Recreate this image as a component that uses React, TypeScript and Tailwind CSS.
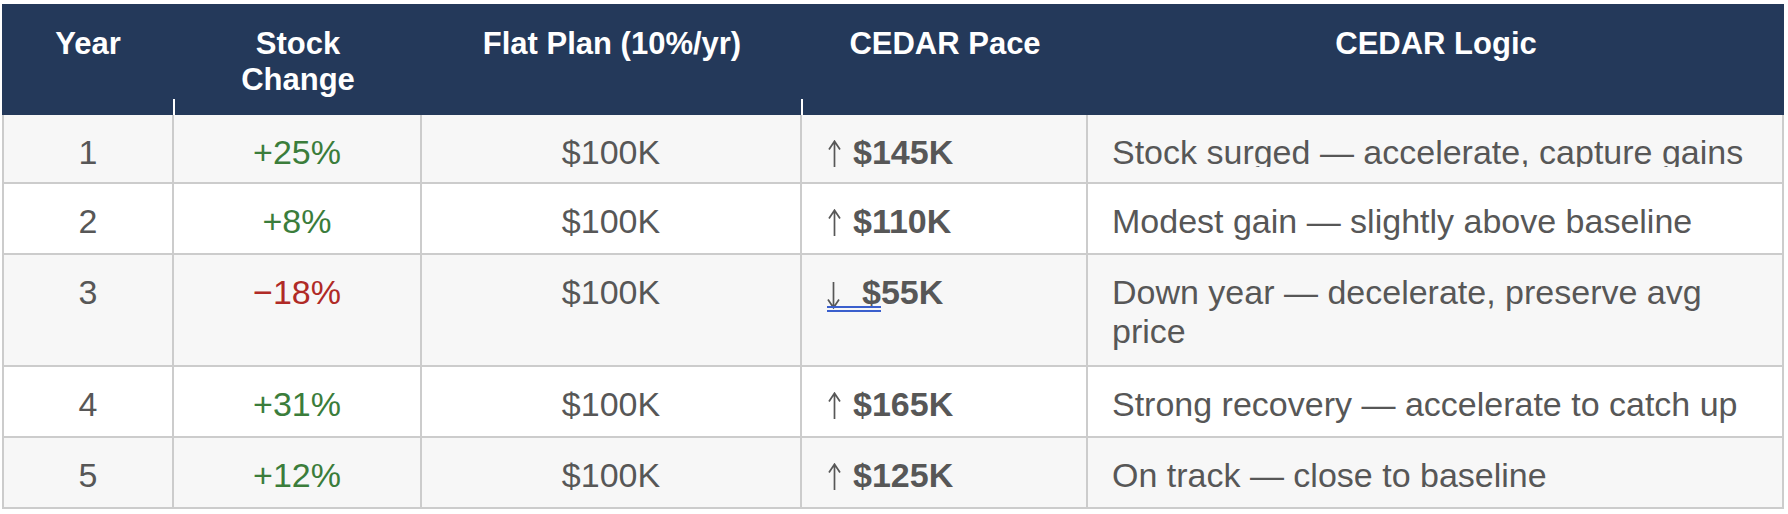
const rows = [
  {
    year: '1',
    change: '+25%',
    up: true,
    flat: '$100K',
    pace: '$145K',
    logic: 'Stock surged — accelerate, capture gains',
    clip: true,
  },
  {
    year: '2',
    change: '+8%',
    up: true,
    flat: '$100K',
    pace: '$110K',
    logic: 'Modest gain — slightly above baseline',
  },
  {
    year: '3',
    change: '−18%',
    up: false,
    flat: '$100K',
    pace: '$55K',
    logic: 'Down year — decelerate, preserve avg price',
  },
  {
    year: '4',
    change: '+31%',
    up: true,
    flat: '$100K',
    pace: '$165K',
    logic: 'Strong recovery — accelerate to catch up',
  },
  {
    year: '5',
    change: '+12%',
    up: true,
    flat: '$100K',
    pace: '$125K',
    logic: 'On track — close to baseline',
  },
]

function Tick() {
  return <span className="absolute bottom-0 right-[-1px] h-[16px] w-[2px] bg-white" />
}

function Arrow({ up }: { up: boolean }) {
  return (
    <svg
      viewBox="0 0 13 27"
      className={`inline-block h-[27px] w-[13px] ${up ? 'ml-[2px] mr-[12px] align-[-3px]' : 'ml-[1px] mr-[22px] align-[-5px]'}`}
      fill="none"
      stroke="currentColor"
      strokeWidth="1.7"
    >
      {up ? (
        <path d="M6.5 1 V27 M1 9.5 L6.5 1.2 L12 9.5" />
      ) : (
        <path d="M6.5 0 V26 M1 17.5 L6.5 25.8 L12 17.5" />
      )}
    </svg>
  )
}

export default function App() {
  return (
    <div className="min-h-screen bg-white pl-[2px] pt-[4px] font-['Liberation_Sans',Arial,sans-serif]">
      <table className="w-[1782px] table-fixed border-separate border-spacing-0">
        <colgroup>
          <col className="w-[172px]" />
          <col className="w-[248px]" />
          <col className="w-[380px]" />
          <col className="w-[286px]" />
          <col className="w-[696px]" />
        </colgroup>
        <thead>
          <tr className="bg-[#24395a] text-[31px] font-bold leading-[1.149] text-white">
            <th className="relative px-6 pb-[18px] pt-[22px] text-center align-top">
              Year
              <Tick />
            </th>
            <th className="px-6 pb-[18px] pt-[22px] text-center align-top">Stock Change</th>
            <th className="relative px-6 pb-[18px] pt-[22px] text-center align-top">
              Flat Plan (10%/yr)
              <Tick />
            </th>
            <th className="px-6 pb-[18px] pt-[22px] text-center align-top">CEDAR Pace</th>
            <th className="px-6 pb-[18px] pt-[22px] text-center align-top">CEDAR Logic</th>
          </tr>
        </thead>
        <tbody className="text-[34px] leading-[39px] text-[#575757]">
          {rows.map((r, i) => {
            const pad =
              r.year === '3'
                ? 'pt-[18px] pb-[14px]'
                : r.year === '1'
                  ? 'pt-[18px] pb-[10px]'
                  : 'pt-[18px] pb-[12px]'
            return (
              <tr key={r.year} className={i % 2 === 0 ? 'bg-[#f7f7f7]' : 'bg-white'}>
                <td className={`border-b-2 border-l-2 border-r-2 border-[#cccccc] px-6 text-center align-top ${pad}`}>
                  {r.year}
                </td>
                <td
                  className={`border-b-2 border-r-2 border-[#cccccc] px-6 text-center align-top ${pad} ${
                    r.up ? 'text-[#3b7d3b]' : 'text-[#b02a26]'
                  }`}
                >
                  {r.change}
                </td>
                <td className={`border-b-2 border-r-2 border-[#cccccc] px-6 text-center align-top ${pad}`}>
                  {r.flat}
                </td>
                <td className={`border-b-2 border-r-2 border-[#cccccc] px-6 text-left align-top ${pad}`}>
                  {r.up ? (
                    <>
                      <Arrow up />
                      <span className="font-bold">{r.pace}</span>
                    </>
                  ) : (
                    <>
                      <span className="relative">
                        <Arrow up={false} />
                        <span className="font-bold">$</span>
                        <span className="absolute left-[1px] right-0 top-[33px] h-[6px] border-y-2 border-[#3a5fcd]" />
                      </span>
                      <span className="font-bold">{r.pace.slice(1)}</span>
                    </>
                  )}
                </td>
                <td className={`border-b-2 border-r-2 border-[#cccccc] px-6 text-left align-top ${pad}`}>
                  {r.clip ? (
                    <div className="h-[34px] overflow-hidden">{r.logic}</div>
                  ) : (
                    r.logic
                  )}
                </td>
              </tr>
            )
          })}
        </tbody>
      </table>
    </div>
  )
}
